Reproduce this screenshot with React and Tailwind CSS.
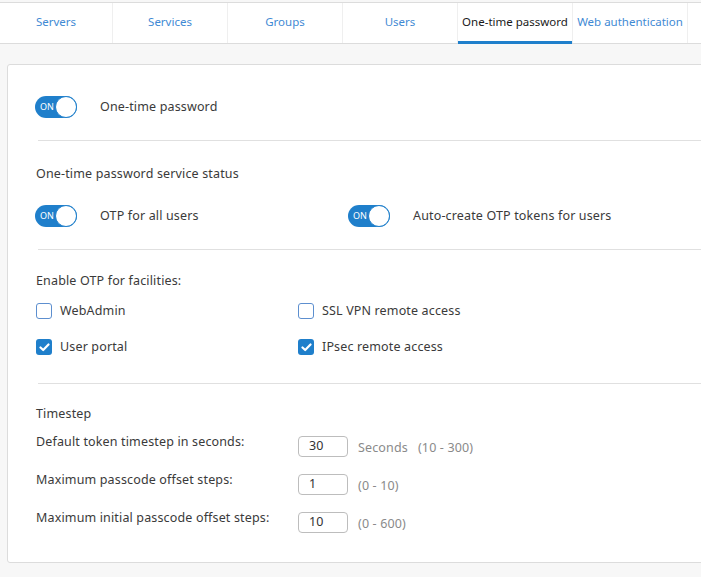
import React from "react";

const tabs = [
  { label: "Servers", w: "w-[113px]" },
  { label: "Services", w: "w-[115px]" },
  { label: "Groups", w: "w-[115px]" },
  { label: "Users", w: "w-[115px]" },
  { label: "One-time password", w: "w-[115px]", active: true },
  { label: "Web authentication", w: "w-[115px]" },
];

const Toggle = () => (
  <div className="relative w-[42px] h-[22px] rounded-full bg-[#1f7fcb] shrink-0">
    <span className="absolute left-[5px] top-[5px] text-[9px] leading-[12px] tracking-normal text-white">ON</span>
    <span className="absolute right-0 top-0 w-[22px] h-[22px] rounded-full bg-white border-[1.5px] border-[#1f7fcb]" />
  </div>
);

const Checkbox = ({ checked }) =>
  checked ? (
    <div className="w-4 h-4 rounded-[3px] bg-[#1f7fcb] flex items-center justify-center shrink-0">
      <svg width="11" height="9" viewBox="0 0 11 9">
        <path d="M1.5 4.5 L4.2 7 L9.5 1.5" fill="none" stroke="white" strokeWidth="2.2" strokeLinecap="round" strokeLinejoin="round" />
      </svg>
    </div>
  ) : (
    <div className="w-4 h-4 rounded-[3px] border-[1.5px] border-[#5d8fcf] bg-white shrink-0" />
  );

const Divider = () => <div className="h-px bg-[#e0e0e0] ml-[30px]" />;

const NumberRow = ({ label, value, unit, range }) => (
  <div className="flex items-start h-[21px]">
    <div className="w-[262px] -mt-[2px] leading-4">{label}</div>
    <div className="w-[50px] h-[21px] border border-[#bdbdbd] rounded-[4px] pl-[10px] flex items-center text-[#333]">{value}</div>
    {unit && <span className="ml-[10px] mt-[3px] text-[#8a8a8a]">{unit}</span>}
    <span className="ml-[10px] mt-[3px] text-[#8a8a8a]">{range}</span>
  </div>
);

export default function App() {
  return (
    <div
      className="w-[701px] h-[577px] bg-[#f7f7f7] overflow-hidden text-[12.5px] tracking-[0.15px] text-[#3a3a3a]"
      style={{ fontFamily: '"Noto Sans", "Open Sans", sans-serif' }}
    >
      <div className="h-[2px]" />
      <div className="flex h-[42px] bg-white border-y border-[#dcdcdc] text-[11.5px] tracking-normal">
        {tabs.map((t) => (
          <div
            key={t.label}
            className={`${t.w} shrink-0 relative flex items-center justify-center border-r border-[#efefef] ${
              t.active ? "text-[#1a1a1a]" : "text-[#3f8ad4]"
            }`}
          >
            <span className="-mt-[2px] whitespace-nowrap">{t.label}</span>
            {t.active && <span className="absolute left-0 right-0 -bottom-px h-[3px] bg-[#1f7fcb]" />}
          </div>
        ))}
      </div>

      <div className="ml-[7px] mt-[20px] w-[740px] h-[499px] bg-white border border-[#dcdcdc] rounded-[3px]">
        {/* main switch */}
        <div className="flex items-center pl-[27px] pt-[31px] pb-[22px]">
          <Toggle />
          <span className="ml-[23px]">One-time password</span>
        </div>
        <Divider />

        {/* service status */}
        <div className="pl-[28px] pt-[25px] pb-[22px]">
          <div className="leading-4">One-time password service status</div>
          <div className="flex items-center mt-[23px] -ml-px">
            <div className="flex items-center w-[313px]">
              <Toggle />
              <span className="ml-[23px]">OTP for all users</span>
            </div>
            <div className="flex items-center">
              <Toggle />
              <span className="ml-[23px]">Auto-create OTP tokens for users</span>
            </div>
          </div>
        </div>
        <Divider />

        {/* facilities */}
        <div className="pl-[28px] pt-[23px] pb-[26px]">
          <div className="leading-4">Enable OTP for facilities:</div>
          <div className="grid grid-cols-[262px_1fr] gap-y-[16px] mt-[12px]">
            {[
              ["WebAdmin", false],
              ["SSL VPN remote access", false],
              ["User portal", true],
              ["IPsec remote access", true],
            ].map(([label, checked]) => (
              <div key={label} className="flex items-center h-5">
                <Checkbox checked={checked} />
                <span className="ml-[8px]">{label}</span>
              </div>
            ))}
          </div>
        </div>
        <Divider />

        {/* timestep */}
        <div className="pl-[28px] pt-[22px]">
          <div className="leading-4">Timestep</div>
          <div className="flex flex-col gap-[17px] mt-[14px]">
            <NumberRow label="Default token timestep in seconds:" value="30" unit="Seconds" range="(10 - 300)" />
            <NumberRow label="Maximum passcode offset steps:" value="1" range="(0 - 10)" />
            <NumberRow label="Maximum initial passcode offset steps:" value="10" range="(0 - 600)" />
          </div>
        </div>
      </div>
    </div>
  );
}
